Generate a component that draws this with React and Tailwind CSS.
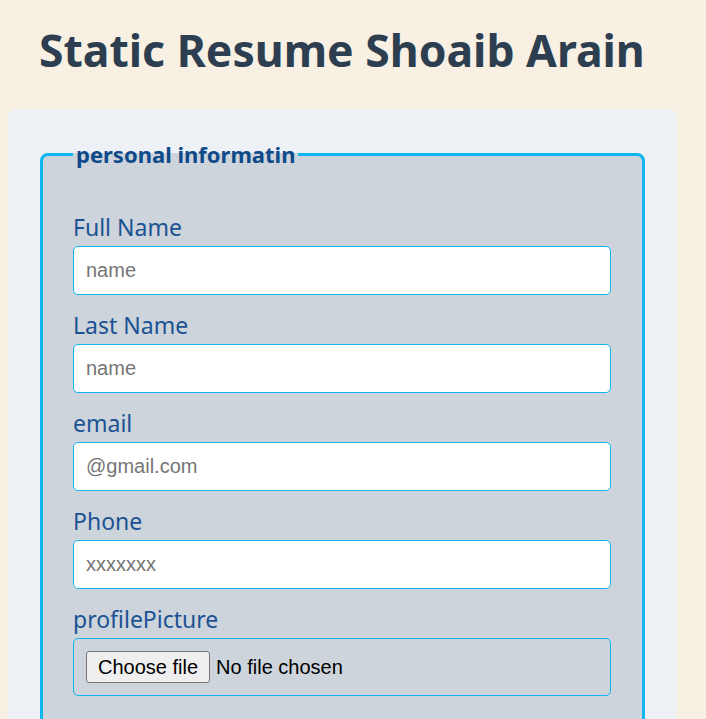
import React from "react";

function Field({ label, placeholder, type = "text" }) {
  return (
    <div className="mb-[15px]">
      <label className="mb-[4px] block text-[23px] leading-[30px] text-[#1b5294]">{label}</label>
      <input
        type={type}
        placeholder={placeholder}
        className="block h-[49px] w-full rounded-[5px] border-[1px] border-solid border-[#0fb5ee] bg-white px-[12px] font-['Liberation_Sans',Arial,sans-serif] text-[20px] text-black outline-none placeholder:text-[#757575]"
      />
    </div>
  );
}

export default function App() {
  return (
    <div className="min-h-screen bg-[#f8f0e3] pb-10 font-['Noto_Sans',sans-serif]">
      <div className="h-[109px] pl-[39px] pt-[20px]">
        <h1 className="text-[44.5px] font-bold leading-[60px] text-[#2c3e50]">Static Resume Shoaib Arain</h1>
      </div>
      <div className="ml-2 w-[669px] rounded-lg bg-[#eef2f7] p-8">
        <fieldset className="rounded-lg border-[3px] border-solid border-[#10b6ef] bg-[#cdd4db] pb-[60px] pl-[30px] pr-[31px] pt-[45px]">
          <legend className="px-[3px] text-[22px] font-bold leading-[26px] text-[#0e4a8a]">personal informatin</legend>
          <Field label="Full Name" placeholder="name" />
          <Field label="Last Name" placeholder="name" />
          <Field label="email" placeholder="@gmail.com" type="email" />
          <Field label="Phone" placeholder="xxxxxxx" type="tel" />
          <div>
            <label className="mb-[4px] block text-[23px] leading-[30px] text-[#1b5294]">profilePicture</label>
            <div className="flex h-[58px] w-full items-center rounded-[5px] border-[1px] border-solid border-[#0fb5ee] px-[12px] font-['Liberation_Sans',Arial,sans-serif] text-[20px] text-black">
              <button
                type="button"
                className="mr-[6px] h-[32px] rounded-[3px] border-[1px] border-solid border-[#767676] bg-[#efefef] px-[11px] leading-[23px] text-black"
              >
                Choose file
              </button>
              <span>No file chosen</span>
            </div>
          </div>
        </fieldset>
      </div>
    </div>
  );
}
